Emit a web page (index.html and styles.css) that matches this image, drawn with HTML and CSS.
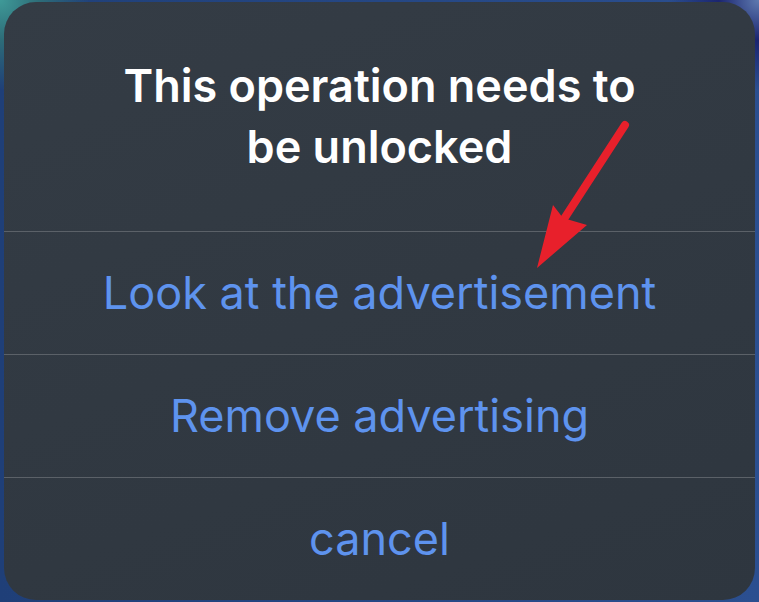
FILE: index.html
```html
<!DOCTYPE html>
<html lang="en">
<head>
    <meta charset="UTF-8">
    <meta name="viewport" content="width=device-width, initial-scale=1.0">
    <title>Unlock</title>
    <link rel="stylesheet" href="styles.css">
</head>
<body>
    <div class="sheet">
        <div class="sheet-title">This operation needs to<br>be unlocked</div>
        <div class="sheet-action">Look at the advertisement</div>
        <div class="sheet-action">Remove advertising</div>
        <div class="sheet-action">cancel</div>

        <svg class="arrow" width="759" height="602" viewBox="0 0 759 602">
            <line x1="625" y1="125" x2="562" y2="222" stroke="#e8202b" stroke-width="8" stroke-linecap="round"/>
            <polygon points="537,268 553,205 563,218 587,225" fill="#e8202b"/>
        </svg>
    </div>
</body>
</html>
```

FILE: styles.css
```css
body {
    margin: 0;
    height: 602px;
    overflow: hidden;
    font-family: Inter, "Noto Sans", sans-serif;
    background:
        radial-gradient(circle at 0 0, #3f9a98 0, #2d6c78 40px, transparent 90px),
        radial-gradient(circle at 100% 0, #5f7bb0 0, #1b2570 40px, transparent 90px),
        linear-gradient(to right, #1f3f78, #2b4f90);
}
.sheet {
    position: relative;
    margin: 2px 4px 0 4px;
    height: 598px;
    border-radius: 32px;
    background: linear-gradient(160deg, #343c45, #2e363f);
    display: flex;
    flex-direction: column;
    overflow: hidden;
}
.sheet-title {
    height: 229px;
    display: flex;
    align-items: center;
    justify-content: center;
    text-align: center;
    color: #ffffff;
    font-size: 45px;
    font-weight: 600;
    line-height: 61px;
    padding-bottom: 2px;
    box-sizing: border-box;
}
.sheet-action {
    flex: 1;
    display: flex;
    align-items: center;
    justify-content: center;
    border-top: 1px solid #5b6168;
    color: #5e93ee;
    font-size: 45px;
    font-weight: 400;
    padding-bottom: 2px;
}
.arrow {
    position: absolute;
    left: -4px;
    top: -2px;
    pointer-events: none;
}
```
